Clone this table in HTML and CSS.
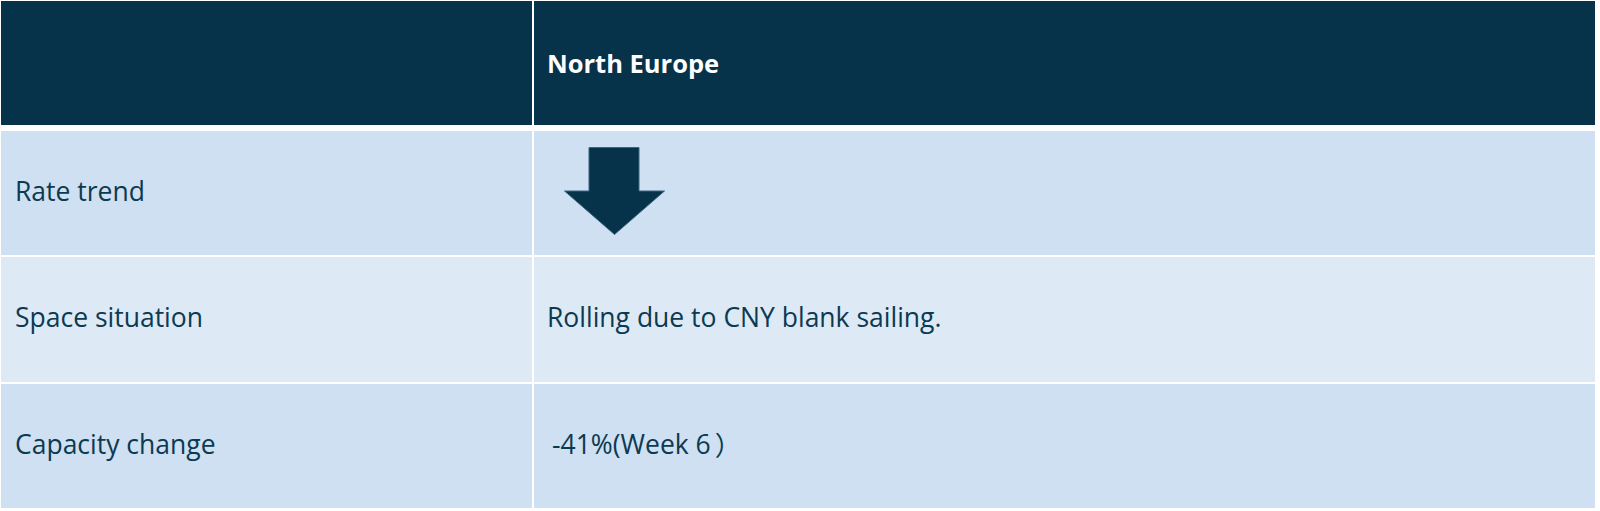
FILE: index.html
```html
<!DOCTYPE html>
<html lang="en">
<head>
<meta charset="utf-8">
<title>North Europe</title>
<link rel="stylesheet" href="styles.css">
</head>
<body>
<div class="table">
  <div class="row head">
    <div class="cell"></div>
    <div class="cell">North Europe</div>
  </div>
  <div class="row odd">
    <div class="cell">Rate trend</div>
    <div class="cell arrow-cell">
      <svg class="arrow" width="101" height="88" viewBox="0 0 101 88">
        <polygon points="25,0.5 75,0.5 75,44 100.5,44 50.5,87.5 0.5,44 25,44" fill="#06324a" stroke="#3b6580" stroke-width="1"/>
      </svg>
    </div>
  </div>
  <div class="row even">
    <div class="cell">Space situation</div>
    <div class="cell">Rolling due to CNY blank sailing.</div>
  </div>
  <div class="row odd">
    <div class="cell">Capacity change</div>
    <div class="cell value">-41%(Week 6<span class="paren">）</span></div>
  </div>
</div>
</body>
</html>
```
FILE: styles.css
```css
html, body {
  margin: 0;
  padding: 0;
  background: #ffffff;
}
body {
  font-family: "Open Sans", "Noto Sans CJK SC", sans-serif;
  font-size: 26.5px;
  color: #0b3a52;
}
.table {
  margin: 1px 0 0 1px;
  width: 1594px;
  display: flex;
  flex-direction: column;
  gap: 2px;
}
.row {
  display: grid;
  grid-template-columns: 531px 1061px;
  column-gap: 2px;
}
.row .cell {
  display: flex;
  align-items: center;
  padding-left: 14px;
  padding-bottom: 5px;
}
.row .cell + .cell {
  padding-left: 13px;
}
.head {
  height: 124px;
  margin-bottom: 4px;
}
.head .cell {
  background: #06324a;
  color: #ffffff;
  font-weight: 700;
  font-size: 25.5px;
  padding-bottom: 0;
}
.odd { height: 124px; }
.even { height: 125px; }
.odd .cell { background: #cee0f1; }
.even .cell { background: #dde9f5; }
.row .cell.arrow-cell {
  align-items: flex-start;
  padding-top: 16px;
  padding-left: 30px;
}
.row .cell.value {
  padding-left: 18px;
}
.paren {
  font-family: "Noto Sans CJK SC", sans-serif;
  margin-left: 4px;
}
```
